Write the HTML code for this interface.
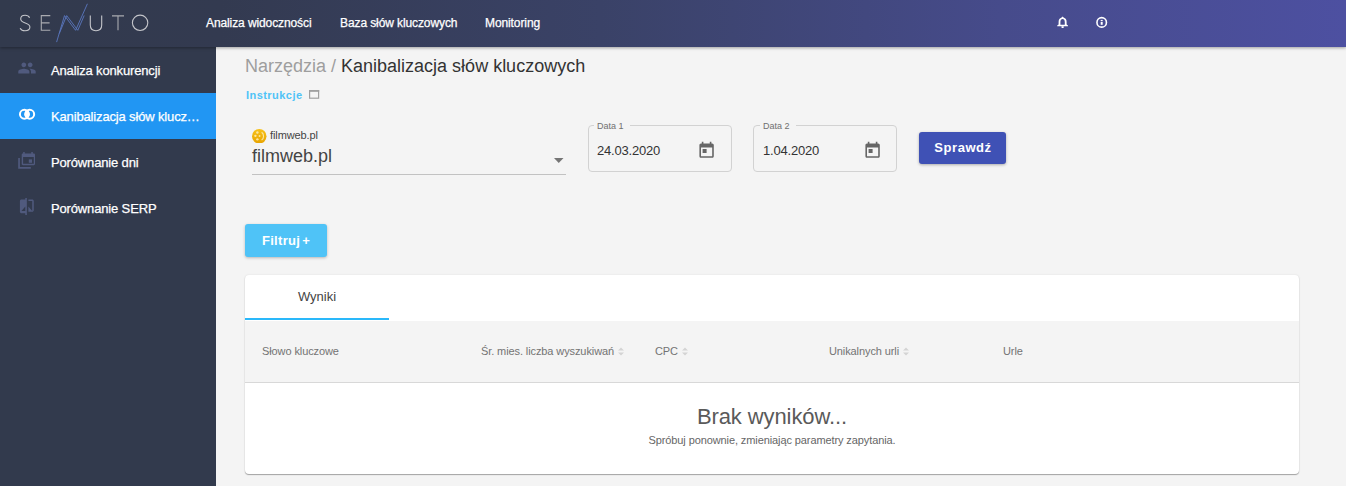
<!DOCTYPE html>
<html><head><meta charset="utf-8">
<style>
*{box-sizing:border-box;margin:0;padding:0}
html,body{width:1346px;height:486px;overflow:hidden;background:#f4f4f4;font-family:"Liberation Sans",sans-serif}
.hdr{position:absolute;left:0;top:0;width:1346px;height:47px;background:linear-gradient(90deg,#323a4d 0px,#333a50 220px,#3a4267 600px,#464b8b 1000px,#4d50a1 1346px);box-shadow:0 1px 3px rgba(0,0,0,.35);z-index:5}
.nav{position:absolute;top:16px;color:#fff;font-size:12px;letter-spacing:-0.1px;-webkit-text-stroke:0.25px #fff}
.side{position:absolute;left:0;top:47px;width:216px;height:439px;background:#323a4d}
.item{position:absolute;left:0;width:216px;height:46px;color:#fff;font-size:13px;letter-spacing:-0.15px;-webkit-text-stroke:0.25px #fff}
.item span{position:absolute;left:51px;top:16px}
.item.act{background:#2196f3}
.item svg{position:absolute;left:18px;top:14px}
.abs{position:absolute}
.card{position:absolute;left:245px;top:275px;width:1054px;height:199px;background:#fff;border-radius:4px;box-shadow:0 1px 1px rgba(0,0,0,.32),0 0 2px rgba(0,0,0,.1);overflow:hidden}
.th{position:absolute;top:70px;font-size:11px;color:#737373;white-space:nowrap;letter-spacing:-0.1px}
.srt{display:inline-block;vertical-align:-1px;margin-left:1px}
</style></head><body>
<div class="hdr">
  <svg class="abs" style="left:0;top:0" width="160" height="46" viewBox="0 0 160 46">
    <g fill="none" stroke="#c4c5ca" stroke-width="1.1">
      <path d="M29.6 17.8C28.8 16.1 27.2 15.3 25.1 15.3C22.4 15.3 20.7 16.8 20.7 19C20.7 24.1 29.9 21.7 29.9 27.1C29.9 29.4 27.9 30.8 25 30.8C22.8 30.8 21 29.8 20.1 28.2"/>
      <path d="M50.3 15.6H41.3V30.2H50.3M41.3 22.9H49.6" stroke="#a9aab0"/>
      <path d="M90.3 15.5V25C90.3 28.6 92.4 30.7 96 30.7S101.7 28.6 101.7 25V15.5"/>
      <path d="M112 15.9H124M118 15.9V30.3" stroke="#a9aab0"/>
      <circle cx="140.1" cy="22.8" r="7.7"/>
    </g>
    <g fill="none" stroke="#5a77bf" stroke-width="0.9">
      <path d="M56.6 42.1L64.5 15.6L75.6 30.3L87.4 3.8"/>
      <path d="M59.3 33.5L66.7 15.6L77.8 30.3L84.2 15.5"/>
    </g>
  </svg>
  <div class="nav" style="left:206px">Analiza widoczności</div>
  <div class="nav" style="left:340px">Baza słów kluczowych</div>
  <div class="nav" style="left:485px">Monitoring</div>
  <svg class="abs" style="left:1056px;top:15px" width="14" height="14" viewBox="0 0 14 14"><path fill="#fff" fill-rule="evenodd" d="M6.6 1.4L7.6 2.6C9.6 3.2 10.6 4.8 10.6 7V9.6L12 10.6V11.2H1.2V10.6L2.6 9.6V7C2.6 4.8 3.6 3.2 5.6 2.6ZM4.4 9.8H8.8V6.9C8.8 5.2 7.9 4.1 6.6 4.1C5.3 4.1 4.4 5.2 4.4 6.9Z"/><path fill="#fff" d="M5.5 11.2H7.7V12.4C7.7 12.8 7.2 13 6.6 13S5.5 12.8 5.5 12.4Z"/></svg>
  <svg class="abs" style="left:1095px;top:15px" width="14" height="14" viewBox="0 0 14 14"><circle cx="6.7" cy="7.4" r="4.75" fill="none" stroke="#fff" stroke-width="1.6"/><rect x="5.7" y="6.9" width="2" height="2.9" fill="#fff"/><rect x="5.7" y="4.9" width="2" height="1.2" fill="#fff"/></svg>
</div>
<div class="side">
  <div class="item" style="top:0"><span>Analiza konkurencji</span></div>
  <div class="item act" style="top:46px"><span>Kanibalizacja słów klucz…</span></div>
  <div class="item" style="top:92px"><span>Porównanie dni</span></div>
  <div class="item" style="top:138px"><span>Porównanie SERP</span></div>
</div>
<svg class="abs" style="left:0;top:0;z-index:2" width="40" height="230" viewBox="0 0 40 230">
  <g transform="translate(17.5 58.5) scale(0.7917)" fill="#505a7e"><path d="M16 11c1.66 0 2.99-1.34 2.99-3S17.66 5 16 5c-1.66 0-3 1.34-3 3s1.34 3 3 3zm-8 0c1.66 0 2.99-1.34 2.99-3S9.66 5 8 5C6.34 5 5 6.34 5 8s1.340 3 3 3zm0 2c-2.33 0-7 1.17-7 3.5V19h14v-2.5c0-2.33-4.67-3.5-7-3.5zm8 0c-.29 0-.62.02-.97.05 1.160.84 1.97 1.97 1.97 3.45V19h6v-2.5c0-2.33-4.67-3.5-7-3.5z"/></g>
  <g fill="none" stroke="#fff" stroke-width="2"><circle cx="24.4" cy="114.25" r="4.45"/><circle cx="29.7" cy="114.25" r="4.45"/></g>
  <path fill="#fff" d="M27.05 109.78A5.2 5.2 0 0 1 27.05 118.72A5.2 5.2 0 0 1 27.05 109.78Z"/>
  <g fill="#505a7e">
    <path fill-rule="evenodd" d="M23.2 152h1.5v1.4h6.6V152h1.5v1.4h1c.6 0 1.2.5 1.2 1.2v9.5c0 .7-.6 1.2-1.2 1.2H22.9c-.7 0-1.2-.5-1.2-1.2v-9.5c0-.7.5-1.2 1.2-1.2h.3zM23.1 157.1v6.7h10.7v-6.7z"/>
    <rect x="28.8" y="159.4" width="3.2" height="3.4"/>
    <path d="M18.2 157.9h1.7v9.1h10.9v1.7H18.2z"/>
  </g>
  <g transform="translate(17.6 197.2) scale(0.77)" fill="#505a7e"><path d="M10 3H5c-1.1 0-2 .9-2 2v14c0 1.1.9 2 2 2h5v2h2V1h-2v2zm0 15H5l5-6v6zm9-15h-5v2h5v13l-5-6v7h5c1.1 0 2-.9 2-2V5c0-1.1-.9-2-2-2z"/></g>
</svg>
<div class="main">
  <div class="abs" style="left:245px;top:56px;font-size:18px;color:#333;white-space:nowrap"><span style="color:#9e9e9e">Narzędzia /</span> Kanibalizacja słów kluczowych</div>
  <div class="abs" style="left:246px;top:89px;font-size:11px;font-weight:bold;color:#4fc3f7;letter-spacing:0.45px">Instrukcje</div>
  <svg class="abs" style="left:308px;top:89px" width="12" height="11" viewBox="0 0 12 11"><rect x="1.6" y="1.6" width="9" height="7.6" fill="none" stroke="#a0a0a0" stroke-width="1.2"/><rect x="1" y="1" width="10.2" height="1.8" fill="#a0a0a0"/></svg>
  <svg class="abs" style="left:252px;top:128.5px" width="14.5" height="14.5" viewBox="0 0 14 14"><defs><linearGradient id="fg" x1="0" y1="0" x2="0" y2="1"><stop offset="0" stop-color="#f7c21a"/><stop offset="1" stop-color="#e8a400"/></linearGradient></defs><circle cx="7" cy="7" r="7" fill="url(#fg)"/><g fill="#fbe6a0"><circle cx="5.2" cy="3.4" r="1.15"/><circle cx="3.3" cy="6.6" r="1.15"/><circle cx="5.2" cy="10" r="1.15"/><circle cx="7.3" cy="6.8" r="0.9"/></g><path d="M9.3 3.2a4.6 4.6 0 0 1 0 7.4" fill="none" stroke="#fbe6a0" stroke-width="1.1"/></svg>
  <div class="abs" style="left:270px;top:129px;font-size:11px;color:#444;letter-spacing:-0.1px">filmweb.pl</div>
  <div class="abs" style="left:252px;top:146px;font-size:18px;color:#444">filmweb.pl</div>
  <div class="abs" style="left:252px;top:174px;width:314px;height:1px;background:#c2c2c2"></div>
  <svg class="abs" style="left:554px;top:157.5px" width="10" height="6" viewBox="0 0 10 6"><path d="M0 0h9.5L4.75 5z" fill="#757575"/></svg>

  <div class="abs" style="left:588px;top:125px;width:144px;height:47px;border:1px solid #d2d2d2;border-radius:4px"></div>
  <div class="abs" style="left:594px;top:121px;padding:0 6px 0 3px;background:#f4f4f4;font-size:9px;color:#707070">Data 1</div>
  <div class="abs" style="left:597px;top:143px;font-size:13px;color:#333;letter-spacing:-0.2px">24.03.2020</div>
  <svg class="abs" style="left:696.6px;top:141px" width="19.2" height="19.2" viewBox="0 0 24 24"><path fill="#666" d="M19 3h-1V1h-2v2H8V1H6v2H5c-1.11 0-1.99.9-1.99 2L3 19c0 1.1.89 2 2 2h14c1.1 0 2-.9 2-2V5c0-1.1-.9-2-2-2zm0 16H5V8h14v11zM7 10h5v5H7z"/></svg>

  <div class="abs" style="left:753px;top:125px;width:144px;height:47px;border:1px solid #d2d2d2;border-radius:4px"></div>
  <div class="abs" style="left:760px;top:121px;padding:0 6px 0 3px;background:#f4f4f4;font-size:9px;color:#707070">Data 2</div>
  <div class="abs" style="left:763px;top:143px;font-size:13px;color:#333;letter-spacing:-0.2px">1.04.2020</div>
  <svg class="abs" style="left:862.6px;top:141px" width="19.2" height="19.2" viewBox="0 0 24 24"><path fill="#666" d="M19 3h-1V1h-2v2H8V1H6v2H5c-1.11 0-1.99.9-1.99 2L3 19c0 1.1.89 2 2 2h14c1.1 0 2-.9 2-2V5c0-1.1-.9-2-2-2zm0 16H5V8h14v11zM7 10h5v5H7z"/></svg>

  <div class="abs" style="left:919px;top:132px;width:87px;height:32px;background:#3f51b5;border-radius:3px;box-shadow:0 1px 3px rgba(0,0,0,.3);color:#fff;font-size:13px;font-weight:bold;text-align:center;line-height:32px;letter-spacing:0.55px;text-indent:1px">Sprawdź</div>

  <div class="abs" style="left:245px;top:224px;width:82px;height:33px;background:#4fc3f7;border-radius:3px;box-shadow:0 1px 3px rgba(0,0,0,.25);color:#fff;font-size:13px;font-weight:bold;text-align:center;line-height:34px;letter-spacing:0.3px">Filtruj<span style="margin-left:2px">+</span></div>

  <div class="card">
    <div class="abs" style="left:0;top:0;width:144px;height:45px;text-align:center;line-height:44px;font-size:13px;color:#444">Wyniki</div>
    <div class="abs" style="left:0;top:43px;width:144px;height:2px;background:#2ab8fa"></div>
    <div class="abs" style="left:0;top:46px;width:1054px;height:62px;background:#f4f4f4;border-bottom:1px solid #d8d8d8"></div>
    <div class="th" style="left:17px">Słowo kluczowe</div>
    <div class="th" style="left:236px">Śr. mies. liczba wyszukiwań <svg class="srt" width="6" height="9" viewBox="0 0 6 9"><path d="M0 3.6L3 0.4L6 3.6zM0 5.4L3 8.6L6 5.4z" fill="#d4d4d4"/></svg></div>
    <div class="th" style="left:410px">CPC <svg class="srt" width="6" height="9" viewBox="0 0 6 9"><path d="M0 3.6L3 0.4L6 3.6zM0 5.4L3 8.6L6 5.4z" fill="#d4d4d4"/></svg></div>
    <div class="th" style="left:584px">Unikalnych urli <svg class="srt" width="6" height="9" viewBox="0 0 6 9"><path d="M0 3.6L3 0.4L6 3.6zM0 5.4L3 8.6L6 5.4z" fill="#d4d4d4"/></svg></div>
    <div class="th" style="left:758px">Urle</div>
    <div class="abs" style="left:0;top:129px;width:1054px;text-align:center;font-size:22px;color:#5a5a5a;letter-spacing:-0.1px">Brak wyników...</div>
    <div class="abs" style="left:0;top:159px;width:1054px;text-align:center;font-size:11px;color:#666;letter-spacing:-0.1px">Spróbuj ponownie, zmieniając parametry zapytania.</div>
  </div>
</div>
</body></html>
